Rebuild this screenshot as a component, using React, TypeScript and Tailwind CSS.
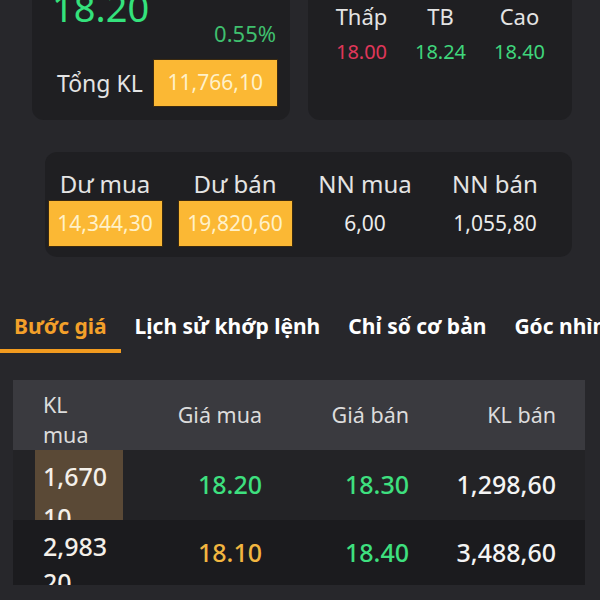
import React from 'react';

const stats = [
  { label: 'Thấp', value: '18.00', color: 'text-[#e0375a]' },
  { label: 'TB', value: '18.24', color: 'text-[#3fd67c]' },
  { label: 'Cao', value: '18.40', color: 'text-[#3fd67c]' },
];

const balances = [
  { label: 'Dư mua', value: '14,344,30', boxed: true },
  { label: 'Dư bán', value: '19,820,60', boxed: true },
  { label: 'NN mua', value: '6,00', boxed: false },
  { label: 'NN bán', value: '1,055,80', boxed: false },
];

const tabs = ['Bước giá', 'Lịch sử khớp lệnh', 'Chỉ số cơ bản', 'Góc nhìn'];

const rows = [
  {
    vol: ['1,670', '10'],
    buy: '18.20',
    buyColor: 'text-[#3ee07f]',
    sell: '18.30',
    sellVol: '1,298,60',
    highlight: true,
    bg: 'bg-[#232326]',
    h: 'h-[70px]',
    lead: 'pt-[6px] leading-[41px]',
  },
  {
    vol: ['2,983', '20'],
    buy: '18.10',
    buyColor: 'text-[#f2b640]',
    sell: '18.40',
    sellVol: '3,488,60',
    highlight: false,
    bg: 'bg-[#1b1b1e]',
    h: 'h-[65px]',
    lead: 'pt-[8px] leading-[36px]',
  },
];

export default function App() {
  return (
    <div
      className="w-[600px] h-[600px] overflow-hidden bg-[#27272b] text-[#e6e6e6]"
      style={{ fontFamily: '"Noto Sans", "Open Sans", sans-serif' }}
    >
      {/* Price summary cards */}
      <div className="flex gap-[18px] pl-[32px] -mt-[40px]">
        <div className="w-[258px] rounded-[12px] bg-[#1f1f22] pt-[28px] pb-[13px] flex flex-col">
          <div className="pl-[20px] text-[38px] leading-[38px] text-[#34e27c]">18.20</div>
          <div className="self-end pr-[14px] -mt-[4px] text-[22px] leading-[22px] text-[#3fbf6e]">0.55%</div>
          <div className="flex items-center gap-[10px] pl-[25px] mt-[15px]">
            <span className="text-[23px] leading-[24px] text-[#e4e4e4]">Tổng KL</span>
            <span className="w-[125px] h-[48px] flex items-center justify-center bg-[#fbb834] border border-[#3b2a10] text-[21px] text-[#fff1c9]">
              11,766,10
            </span>
          </div>
        </div>
        <div className="w-[264px] rounded-[12px] bg-[#1f1f22] pt-[45px] pl-[14px]">
          <div className="grid grid-cols-[79px_79px_79px] text-center">
            {stats.map((s) => (
              <div key={s.label} className="text-[22px] leading-[22px] text-[#e4e4e4]">{s.label}</div>
            ))}
            {stats.map((s) => (
              <div key={s.value} className={`mt-[15px] text-[20px] leading-[20px] ${s.color}`}>{s.value}</div>
            ))}
          </div>
        </div>
      </div>

      {/* Order balance card */}
      <div className="mt-[32px] ml-[45px] w-[527px] rounded-[12px] bg-[#1f1f22] pt-[20px] pb-[10px] pl-[2px] pr-[19px]">
        <div className="grid grid-cols-4 gap-x-[14px]">
          {balances.map((b) => (
            <div key={b.label} className="flex flex-col items-center">
              <div className="text-[24px] leading-[24px] text-[#e4e4e4]">{b.label}</div>
              <div
                className={`mt-[4px] w-[115px] h-[47px] flex items-center justify-center text-[21px] ${
                  b.boxed ? 'bg-[#fbb834] border border-[#3b2a10] text-[#fff1c9]' : 'text-[#ececec]'
                }`}
              >
                {b.value}
              </div>
            </div>
          ))}
        </div>
      </div>

      {/* Tabs */}
      <div className="mt-[55px] flex whitespace-nowrap overflow-hidden">
        {tabs.map((t, i) => (
          <div
            key={t}
            className={`px-[14px] pb-[9px] border-b-[4px] text-[21px] leading-[28px] font-bold ${
              i === 0 ? 'border-[#f29b1f] text-[#f3a02a]' : 'border-transparent text-white'
            }`}
          >
            {t}
          </div>
        ))}
      </div>

      {/* Order book */}
      <div className="mt-[27px] ml-[13px] w-[572px]">
        <div className="grid grid-cols-[88px_147px_147px_147px] pl-[22px] pr-[21px] h-[70px] items-center bg-[#3a3a3f] text-[21.5px] leading-[30px] text-[#dcdcdc]">
          <div className="pl-[8px] pt-[10px]">KL<br />mua</div>
          <div className="text-right pr-[8px]">Giá mua</div>
          <div className="text-right pr-[8px]">Giá bán</div>
          <div className="text-right pr-[8px]">KL bán</div>
        </div>
        {rows.map((r) => (
          <div
            key={r.buy}
            className={`grid grid-cols-[88px_147px_147px_147px] pl-[22px] pr-[21px] ${r.h} items-center ${r.bg} text-[25px] font-medium`}
          >
            <div className={`h-full overflow-hidden pl-[8px] ${r.lead} text-[#f4f0ea] ${r.highlight ? 'bg-[#5a4936]' : ''}`}>
              {r.vol[0]}
              <br />
              {r.vol[1]}
            </div>
            <div className={`text-right pr-[8px] ${r.buyColor}`}>{r.buy}</div>
            <div className="text-right pr-[8px] text-[#3ee07f]">{r.sell}</div>
            <div className="text-right pr-[8px] text-[#f4f4f4]">{r.sellVol}</div>
          </div>
        ))}
      </div>
    </div>
  );
}
